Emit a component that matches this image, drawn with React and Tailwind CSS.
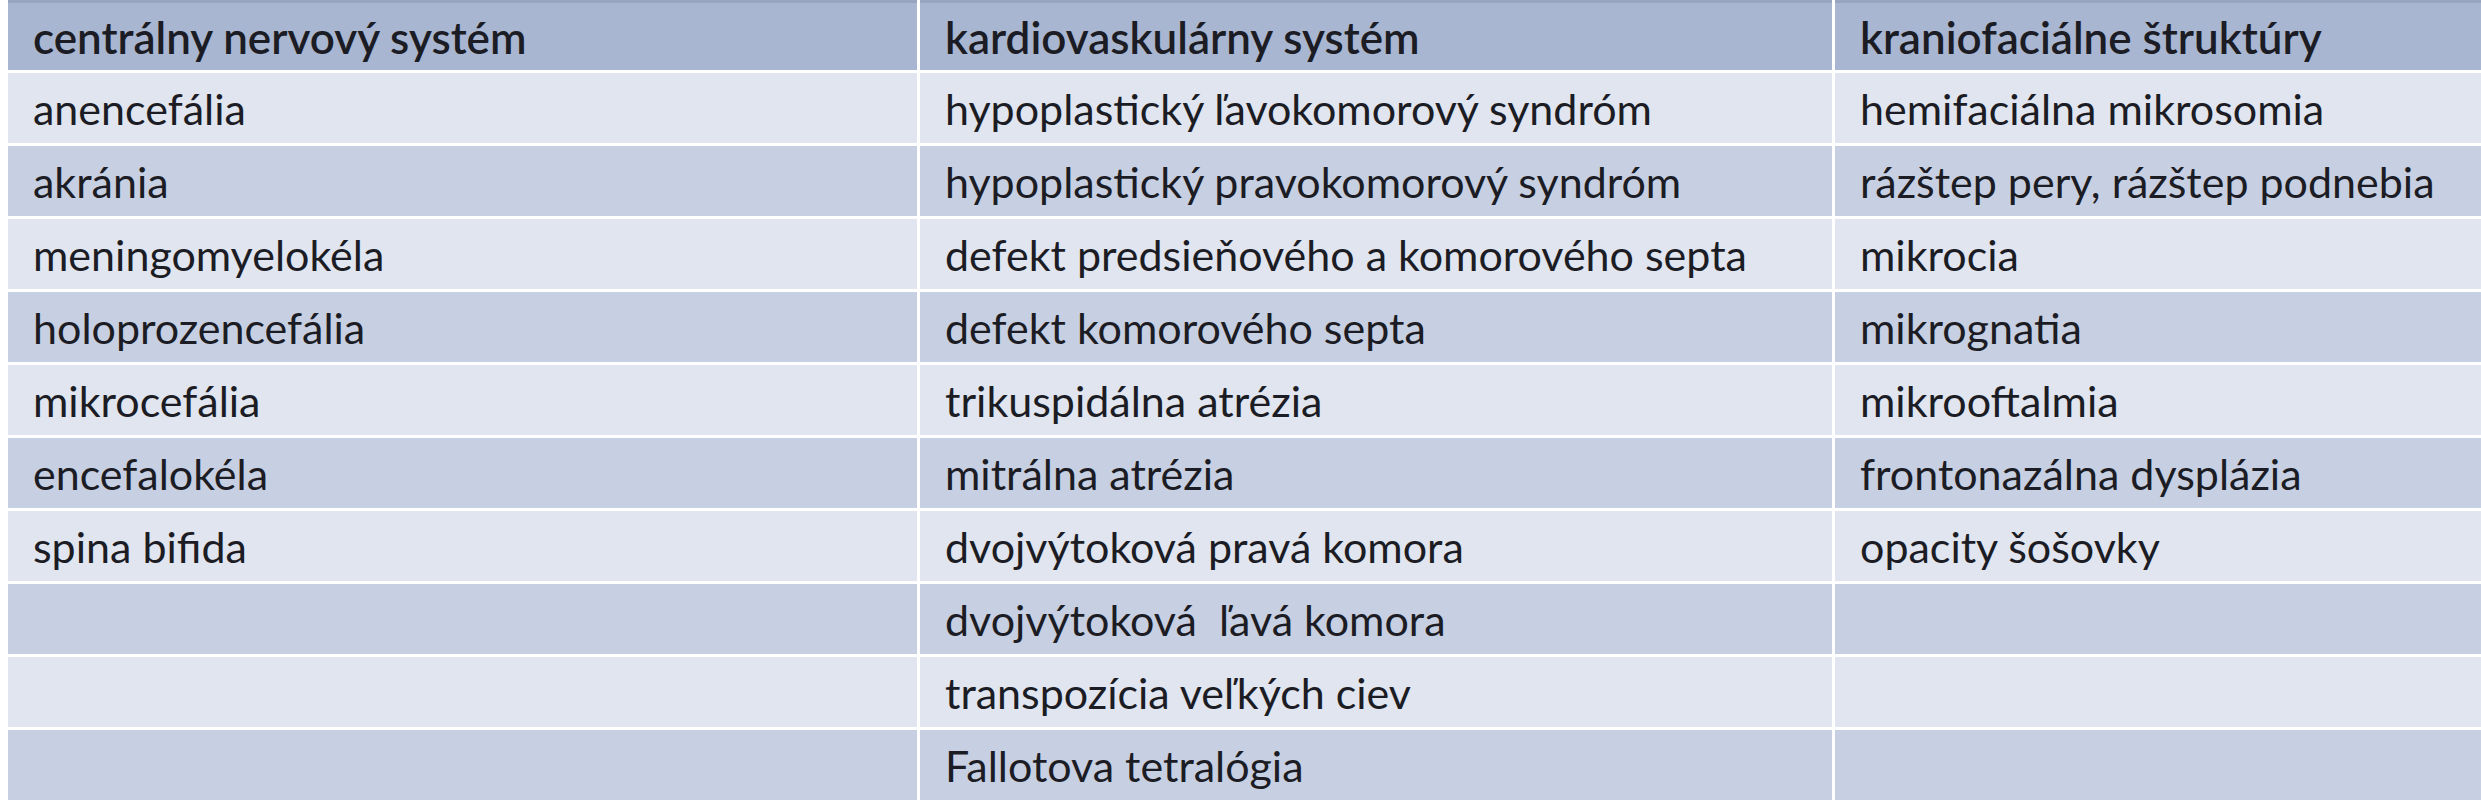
const columns = [
  {
    title: "centrálny nervový systém",
    items: [
      "anencefália",
      "akránia",
      "meningomyelokéla",
      "holoprozencefália",
      "mikrocefália",
      "encefalokéla",
      "spina bifida",
    ],
  },
  {
    title: "kardiovaskulárny systém",
    items: [
      "hypoplastický ľavokomorový syndróm",
      "hypoplastický pravokomorový syndróm",
      "defekt predsieňového a komorového septa",
      "defekt komorového septa",
      "trikuspidálna atrézia",
      "mitrálna atrézia",
      "dvojvýtoková pravá komora",
      "dvojvýtoková  ľavá komora",
      "transpozícia veľkých ciev",
      "Fallotova tetralógia",
    ],
  },
  {
    title: "kraniofaciálne štruktúry",
    items: [
      "hemifaciálna mikrosomia",
      "rázštep pery, rázštep podnebia",
      "mikrocia",
      "mikrognatia",
      "mikrooftalmia",
      "frontonazálna dysplázia",
      "opacity šošovky",
    ],
  },
];

const ROWS = 10;

export default function App() {
  const rows = Array.from({ length: ROWS }, (_, i) => i);

  return (
    <div className="w-full h-[800px] bg-white pl-[8px] overflow-hidden font-['Lato','Open_Sans',sans-serif] text-[43px] text-[#1c1c24]">
      <div className="grid grid-cols-[909px_912px_1fr] grid-rows-[70px] auto-rows-[70px] gap-[3px]">
        {columns.map((col) => (
          <div
            key={col.title}
            className="bg-[#a8b6d1] border-t-[3px] border-[#97a5c1] flex items-center pl-[25px] font-semibold text-[44px] whitespace-pre"
          >
            {col.title}
          </div>
        ))}
        {rows.map((r) =>
          columns.map((col) => (
            <div
              key={col.title + r}
              className={`${
                r % 2 === 0 ? "bg-[#e0e5f0]" : "bg-[#c7cfe2]"
              } flex items-center pl-[25px] pt-[2px] whitespace-pre`}
            >
              {col.items[r] || ""}
            </div>
          ))
        )}
      </div>
    </div>
  );
}
